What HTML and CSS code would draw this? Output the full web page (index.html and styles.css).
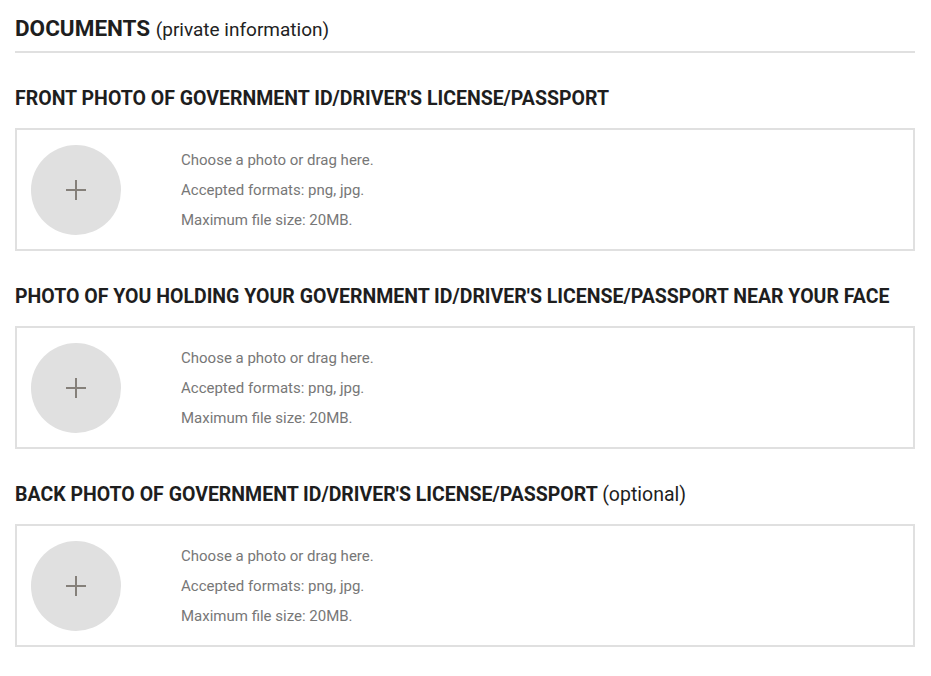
FILE: index.html
```html
<!DOCTYPE html>
<html>
<head>
<meta charset="utf-8">
<link rel="stylesheet" href="styles.css">
</head>
<body>
<div class="page">
  <h1 class="header"><span class="header-main">DOCUMENTS</span> <span class="header-sub">(private information)</span></h1>

  <section class="doc">
    <h2 class="doc-title">FRONT PHOTO OF GOVERNMENT ID/DRIVER'S LICENSE/PASSPORT</h2>
    <div class="upload">
      <div class="circle">
        <svg width="22" height="22" viewBox="0 0 22 22"><path d="M11 1v20M1 11h20" stroke="#85807a" stroke-width="2"/></svg>
      </div>
      <div class="info">
        <div>Choose a photo or drag here.</div>
        <div>Accepted formats: png, jpg.</div>
        <div>Maximum file size: 20MB.</div>
      </div>
    </div>
  </section>

  <section class="doc">
    <h2 class="doc-title">PHOTO OF YOU HOLDING YOUR GOVERNMENT ID/DRIVER'S LICENSE/PASSPORT NEAR YOUR FACE</h2>
    <div class="upload">
      <div class="circle">
        <svg width="22" height="22" viewBox="0 0 22 22"><path d="M11 1v20M1 11h20" stroke="#85807a" stroke-width="2"/></svg>
      </div>
      <div class="info">
        <div>Choose a photo or drag here.</div>
        <div>Accepted formats: png, jpg.</div>
        <div>Maximum file size: 20MB.</div>
      </div>
    </div>
  </section>

  <section class="doc">
    <h2 class="doc-title">BACK PHOTO OF GOVERNMENT ID/DRIVER'S LICENSE/PASSPORT <span class="optional">(optional)</span></h2>
    <div class="upload">
      <div class="circle">
        <svg width="22" height="22" viewBox="0 0 22 22"><path d="M11 1v20M1 11h20" stroke="#85807a" stroke-width="2"/></svg>
      </div>
      <div class="info">
        <div>Choose a photo or drag here.</div>
        <div>Accepted formats: png, jpg.</div>
        <div>Maximum file size: 20MB.</div>
      </div>
    </div>
  </section>
</div>
</body>
</html>
```
FILE: styles.css
```css
html, body {
  margin: 0;
  padding: 0;
  background: #fff;
}
body {
  font-family: Roboto, "Liberation Sans", Arial, sans-serif;
  color: #222;
}
.page {
  width: 900px;
  padding: 0 16px 0 15px;
}
.header {
  margin: 0;
  padding-top: 12px;
  padding-bottom: 5px;
  font-size: 22px;
  line-height: 32px;
  border-bottom: 2px solid #e0e0e0;
  font-weight: normal;
}
.header-main {
  font-size: 22.5px;
  font-weight: 700;
  color: #1e1e1e;
}
.header-sub {
  font-size: 19px;
  font-weight: 400;
  color: #222;
}
.doc-title {
  margin: 34px 0 17px;
  font-size: 19.5px;
  line-height: 24px;
  font-weight: 700;
  color: #1e1e1e;
}
.optional {
  font-weight: 400;
}
.upload {
  display: flex;
  align-items: center;
  border: 2px solid #e0e0e0;
  padding: 15px 14px 14px;
}
.circle {
  width: 90px;
  height: 90px;
  border-radius: 50%;
  background: #e0e0e0;
  display: flex;
  align-items: center;
  justify-content: center;
  flex: none;
}
.circle svg {
  display: block;
}
.info {
  margin-left: 60px;
  font-size: 15px;
  line-height: 30px;
  color: #777;
}
```
